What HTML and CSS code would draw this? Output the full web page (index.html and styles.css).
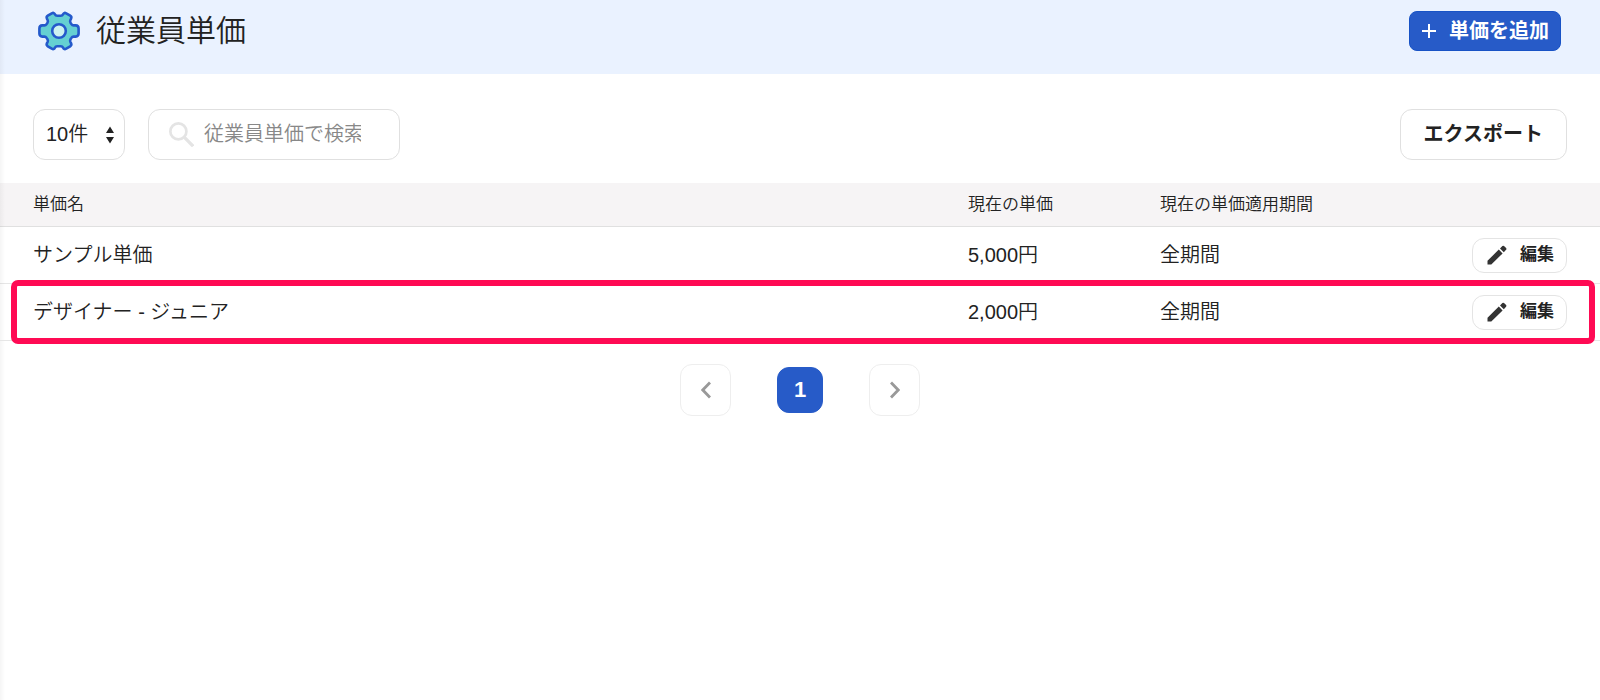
FILE: index.html
```html
<!DOCTYPE html>
<html lang="ja">
<head>
<meta charset="utf-8">
<meta name="viewport" content="width=device-width, initial-scale=1">
<title>従業員単価</title>
<link rel="stylesheet" href="styles.css">
</head>
<body>
<main class="page">
  <header class="page-header">
    <svg class="gear" viewBox="0 0 42 40" aria-hidden="true">
      <path d="M13.8 2.3Q15.8 1.2 16.8 3.2Q17.6 4.8 19.2 4.8H22.8Q24.4 4.8 25.2 3.2Q26.2 1.2 28.2 2.3L32.2 4.7Q34 5.8 33 7.8L32.3 9.3Q31.8 10.5 32.5 11.7L33.6 13.4Q34.2 14.4 35.6 14.4H37.6Q40.6 14.6 40.6 17.4V22.6Q40.6 25.4 37.6 25.6H35.6Q34.2 25.6 33.6 26.6L32.5 28.3Q31.8 29.5 32.3 30.7L33 32.2Q34 34.2 32.2 35.3L28.2 37.7Q26.2 38.8 25.2 36.8Q24.4 35.2 22.8 35.2H19.2Q17.6 35.2 16.8 36.8Q15.8 38.8 13.8 37.7L9.8 35.3Q8 34.2 9 32.2L9.7 30.7Q10.2 29.5 9.5 28.3L8.4 26.6Q7.8 25.6 6.4 25.6H4.4Q1.4 25.4 1.4 22.6V17.4Q1.4 14.6 4.4 14.4H6.4Q7.8 14.4 8.4 13.4L9.5 11.7Q10.2 10.5 9.7 9.3L9 7.8Q8 5.8 9.8 4.7Z" fill="#65d0d2" stroke="#245acb" stroke-width="2.6" stroke-linejoin="round"/>
      <circle cx="21" cy="20" r="6.8" fill="#cdf2f0" stroke="#245acb" stroke-width="2.6"/>
    </svg>
    <h1 class="page-title">従業員単価</h1>
    <button type="button" class="add-button">
      <svg class="plus" viewBox="0 0 14 14" aria-hidden="true"><path d="M7 0v14M0 7h14" fill="none" stroke="currentColor" stroke-width="2"/></svg>
      単価を追加
    </button>
  </header>

  <div class="toolbar">
    <div class="select-box">
      <select class="page-size" aria-label="表示件数">
        <option>10件</option>
      </select>
      <svg class="select-arrows" viewBox="0 0 8 18" aria-hidden="true"><path d="M4 0.5L8 7H0ZM4 17.5L0 11H8Z" fill="#222"/></svg>
    </div>
    <label class="search-box">
      <svg class="search-icon" viewBox="0 0 24 24" aria-hidden="true"><circle cx="9" cy="9" r="7.7" fill="none" stroke="#e4e4e4" stroke-width="2.6"/><path d="M15 15l8.2 8.2" stroke="#e4e4e4" stroke-width="3.2"/></svg>
      <input type="search" class="search-input" placeholder="従業員単価で検索" aria-label="従業員単価で検索">
    </label>
    <button type="button" class="export-button">エクスポート</button>
  </div>

  <table class="rates">
    <thead>
      <tr>
        <th scope="col" class="col-name">単価名</th>
        <th scope="col" class="col-rate">現在の単価</th>
        <th scope="col" class="col-period">現在の単価適用期間</th>
        <td class="col-action"></td>
      </tr>
    </thead>
    <tbody>
      <tr>
        <td class="col-name">サンプル単価</td>
        <td>5,000円</td>
        <td>全期間</td>
        <td class="col-action">
          <button type="button" class="edit-button">
            <svg class="pencil" viewBox="0 0 20 20" aria-hidden="true"><path d="M0.5 15.8L11.8 4.6L15.6 8.4L4.3 19.5H0.5ZM13 3.4L15.4 1Q16.2 0.3 17 1L19.1 3.1Q19.8 3.9 19.1 4.7L16.8 7.2Z" fill="#333"/></svg>
            編集
          </button>
        </td>
      </tr>
      <tr class="highlighted">
        <td class="col-name">デザイナー - ジュニア</td>
        <td>2,000円</td>
        <td>全期間</td>
        <td class="col-action">
          <button type="button" class="edit-button">
            <svg class="pencil" viewBox="0 0 20 20" aria-hidden="true"><path d="M0.5 15.8L11.8 4.6L15.6 8.4L4.3 19.5H0.5ZM13 3.4L15.4 1Q16.2 0.3 17 1L19.1 3.1Q19.8 3.9 19.1 4.7L16.8 7.2Z" fill="#333"/></svg>
            編集
          </button>
        </td>
      </tr>
    </tbody>
  </table>

  <nav class="pagination" aria-label="ページ送り">
    <button type="button" class="page-step" aria-label="前のページ"><svg class="chevron" viewBox="0 0 10 18" aria-hidden="true"><path d="M9 1.5L1.8 9L9 16.5" fill="none" stroke="#999" stroke-width="2.8"/></svg></button>
    <button type="button" class="page-current" aria-current="page">1</button>
    <button type="button" class="page-step" aria-label="次のページ"><svg class="chevron" viewBox="0 0 10 18" aria-hidden="true"><path d="M1 1.5L8.2 9L1 16.5" fill="none" stroke="#999" stroke-width="2.8"/></svg></button>
  </nav>
</main>
</body>
</html>
```

FILE: styles.css
```css
* {
  box-sizing: border-box;
}

body {
  margin: 0;
  background: #fff;
  color: #222;
  font-family: "Liberation Sans", "Noto Sans CJK JP", sans-serif;
  font-size: 20px;
  font-weight: 350;
  line-height: 30px;
}

button,
input,
select {
  font: inherit;
  color: inherit;
}

button {
  display: inline-flex;
  align-items: center;
  justify-content: center;
  margin: 0;
  padding: 0;
  border: 1px solid #e4e4e4;
  background: #fff;
  font-weight: 700;
  white-space: nowrap;
  cursor: pointer;
}

.page {
  position: relative;
  min-height: 100vh;
}

/* soft shadow cast by the side menu */
.page::before {
  content: "";
  position: absolute;
  inset: 0 auto 0 0;
  width: 5px;
  background: linear-gradient(to right, rgba(0, 0, 0, 0.04), rgba(0, 0, 0, 0));
}

.page-header {
  display: flex;
  align-items: center;
  height: 74px;
  padding: 0 39px 12px 38px;
  background: #eaf2ff;
}

.gear {
  width: 42px;
  height: 40px;
}

.page-title {
  margin: 0 auto 0 16px;
  font-size: 30px;
  font-weight: 350;
  line-height: 40px;
}

.add-button {
  gap: 13px;
  height: 40px;
  padding: 0 11px 0 12px;
  border-color: #1853c6;
  border-radius: 8px;
  background: #275bc8;
  color: #fff;
}

.plus {
  width: 14px;
  height: 14px;
}

.toolbar {
  display: flex;
  gap: 23px;
  padding: 35px 33px 23px;
}

.select-box {
  position: relative;
  width: 92px;
}

.page-size {
  width: 100%;
  height: 51px;
  padding: 0 12px 2px;
  border: 1px solid #e0e0e0;
  border-radius: 12px;
  background: #fff;
  appearance: none;
}

.select-arrows {
  position: absolute;
  top: 17px;
  right: 11px;
  width: 8px;
  height: 18px;
  pointer-events: none;
}

.search-box {
  display: flex;
  align-items: center;
  gap: 10px;
  width: 252px;
  height: 51px;
  padding: 0 20px;
  border: 1px solid #e0e0e0;
  border-radius: 12px;
}

.search-icon {
  flex: none;
  width: 25px;
  height: 25px;
}

.search-input {
  min-width: 0;
  flex: 1;
  padding: 0 0 2px;
  border: 0;
  outline: 0;
  background: none;
}

.search-input::placeholder {
  color: #888;
  opacity: 1;
}

.export-button {
  height: 51px;
  margin-left: auto;
  padding: 0 23px 2px;
  border-color: #e0e0e0;
  border-radius: 12px;
}

.rates {
  width: 100%;
  border-collapse: separate;
  border-spacing: 0;
  table-layout: fixed;
}

.rates th,
.rates td {
  height: 57px;
  padding: 0;
  border-bottom: 1px solid #e6e6e6;
  text-align: left;
  vertical-align: middle;
}

.rates thead th,
.rates thead td {
  height: 44px;
  border-color: #e0e0e0;
  background: #f6f4f5;
  font-size: 17px;
  font-weight: 350;
}

.rates .col-name {
  width: 60.5%;
  padding-left: 33px;
}

.col-rate {
  width: 12%;
}

.col-period {
  width: 17%;
}

.rates .col-action {
  padding-right: 33px;
  text-align: right;
}

.edit-button {
  gap: 13px;
  height: 35px;
  padding: 0 12px 0 14px;
  border-radius: 12px;
  font-size: 17px;
  vertical-align: middle;
}

.pencil {
  width: 20px;
  height: 20px;
}

.highlighted {
  position: relative;
}

.highlighted .col-action::after {
  content: "";
  position: absolute;
  inset: -4px 5px -3px 11px;
  border: 6px solid #ff0a54;
  border-radius: 7px;
  pointer-events: none;
}

.pagination {
  display: flex;
  align-items: center;
  justify-content: center;
  gap: 46px;
  padding: 23px 0;
}

.page-step {
  width: 51px;
  height: 52px;
  border-color: #eee;
  border-radius: 12px;
}

.page-current {
  width: 46px;
  height: 46px;
  border-color: #275bc8;
  border-radius: 12px;
  background: #275bc8;
  color: #fff;
  font-size: 22px;
}

.chevron {
  width: 10px;
  height: 18px;
}
```
